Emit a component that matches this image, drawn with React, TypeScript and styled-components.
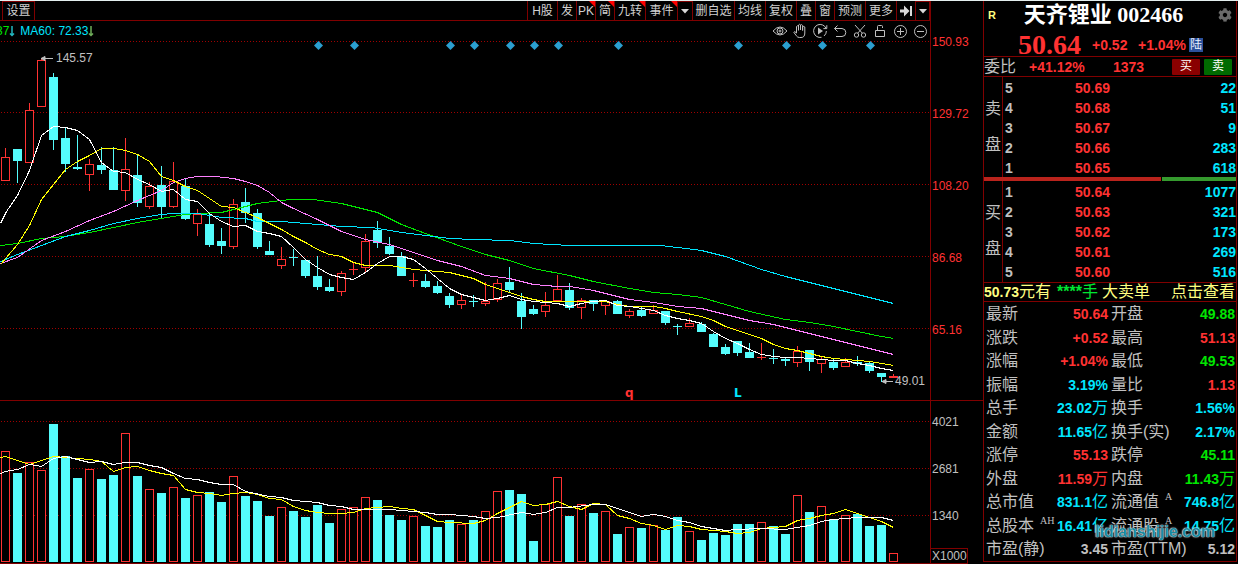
import React from "react";
import styled, { createGlobalStyle, css } from "styled-components";
import { FaCog } from "react-icons/fa";

const RED = "#ff3232";
const CYAN = "#00e6ff";
const CANDLE = "#54fcfc";
const GREEN = "#00e600";
const GREY = "#c0c0c0";
const LINE = "#800000";
const YELLOW = "#ffff80";

const GlobalStyle = createGlobalStyle`
  *, *::before, *::after { box-sizing: border-box; }
  body {
    margin: 0;
    background: #000;
    color: ${GREY};
    font-family: "Liberation Sans", "Noto Sans CJK SC", sans-serif;
    font-size: 12px;
  }
  button { font-family: inherit; }
`;

/* ---------- page frame ---------- */

const Page = styled.main`
  display: flex;
  align-items: stretch;
  min-height: 100vh;
  border-top: 1px solid #e4eeee;
  background: #000;
  overflow: hidden;
`;

const ChartSide = styled.section`
  flex: 1;
  min-width: 0;
  display: grid;
  grid-template-columns: minmax(0, 1fr) 53px;
  grid-template-rows: 400px auto;
`;

const Pane = styled.div<{ $bottom?: number }>`
  display: flex;
  flex-direction: column;
  border-bottom: ${(p) => p.$bottom ?? 1}px solid ${LINE};
  overflow: hidden;
`;

/* ---------- toolbar ---------- */

const Toolbar = styled.nav`
  display: flex;
  justify-content: space-between;
  height: 20px;
  padding-left: 2px;
  border-bottom: 1px solid ${LINE};
`;

const ToolGroup = styled.div`
  display: flex;
`;

const ToolButton = styled.button<{ $width: number; $mark?: boolean; $boxed?: boolean }>`
  position: relative;
  display: flex;
  align-items: center;
  justify-content: center;
  width: ${(p) => p.$width}px;
  height: 19px;
  padding: 0;
  border: 0 solid ${LINE};
  border-left-width: 1px;
  background: none;
  color: #d0d0d0;
  font-size: 12px;
  line-height: 18px;
  white-space: nowrap;

  &:last-child {
    border-right-width: 1px;
  }
  ${(p) =>
    p.$boxed &&
    css`
      border-top-width: 1px;
    `}
  ${(p) =>
    p.$mark &&
    css`
      &::after {
        content: "";
        position: absolute;
        top: 0;
        right: 0;
        border: 3px solid transparent;
        border-top-color: #f00;
        border-right-color: #f00;
      }
    `}
`;

const Legend = styled.div`
  display: flex;
  justify-content: space-between;
  align-items: center;
  height: 20px;
  flex: none;
`;

const LegendText = styled.div`
  display: flex;
  gap: 5px;
  margin-left: -4px;
  line-height: 16px;
  white-space: nowrap;
`;

const Ma = styled.span<{ $color: string }>`
  display: flex;
  align-items: center;
  color: ${(p) => p.$color};
`;

const IconButton = styled.button`
  display: flex;
  align-items: center;
  justify-content: center;
  width: 20px;
  height: 20px;
  padding: 0;
  border: 0;
  background: none;
  color: ${GREY};
`;

const Plot = styled.svg`
  display: block;
  width: 100%;
  flex: none;
`;

/* ---------- axis ---------- */

const Axis = styled.div<{ $color: string; $gap: number; $top: number }>`
  display: flex;
  flex-direction: column;
  align-items: flex-start;
  gap: ${(p) => p.$gap}px;
  padding: ${(p) => p.$top}px 0 0 1px;
  border-left: 1px solid ${LINE};
  border-bottom: 1px solid ${LINE};
  color: ${(p) => p.$color};
  line-height: 16px;
`;

const Unit = styled.span`
  margin-left: -1px;
  margin-top: -7px;
  border: 1px solid ${LINE};
  border-left: 0;
  padding-left: 1px;
  line-height: 14px;
`;

/* ---------- quote panel ---------- */

const Panel = styled.aside`
  position: relative;
  flex: none;
  width: 254px;
  margin-right: 1px;
  border: 1px solid ${LINE};
  border-top: 0;
  align-self: flex-start;
`;

const Head = styled.header`
  height: 56px;
  border-bottom: 1px solid ${LINE};
`;

const TitleRow = styled.div`
  display: flex;
  align-items: center;
  justify-content: space-between;
  height: 27px;
  padding: 0 4px;
`;

const Flag = styled.span`
  color: ${YELLOW};
  font-size: 11px;
  font-weight: bold;
`;

const Title = styled.h1`
  margin: 0 7px 0 0;
  color: #fff;
  font: bold 22px/26px "Liberation Serif", "Noto Sans CJK SC", serif;
  white-space: nowrap;
`;

const GearButton = styled.button`
  display: flex;
  padding: 0;
  border: 0;
  background: none;
  color: #6a6a6a;
`;

const PriceRow = styled.div`
  display: flex;
  align-items: center;
  height: 28px;
  padding: 5px 0 0 34px;
`;

const LastPrice = styled.strong`
  width: 74px;
  color: ${RED};
  font: bold 28px/22px "Liberation Serif", serif;
`;

const Num = styled.span<{ $color?: string; $width?: number }>`
  width: ${(p) => (p.$width ? `${p.$width}px` : "auto")};
  color: ${(p) => p.$color ?? RED};
  font-size: 14px;
  font-weight: bold;
`;

const Badge = styled.span`
  width: 14px;
  height: 14px;
  background: #2c519c;
  color: #e8eefa;
  font-size: 12px;
  line-height: 14px;
  text-align: center;
`;

const RatioRow = styled.div`
  display: flex;
  align-items: center;
  height: 20px;
  padding-right: 3px;
  border-bottom: 1px solid ${LINE};
`;

const RatioLabel = styled.span`
  width: 45px;
  font-size: 16px;
  line-height: 18px;
`;

const TradeButton = styled.button<{ $bg: string }>`
  width: 28px;
  height: 16px;
  margin-left: 4px;
  padding: 0;
  border: 0;
  border-radius: 1px;
  background: ${(p) => p.$bg};
  color: #fff;
  font-size: 12px;
  line-height: 15px;
`;

const Book = styled.section<{ $height: number }>`
  display: flex;
  align-items: stretch;
  height: ${(p) => p.$height}px;
`;

const BookSide = styled.div`
  display: flex;
  flex-direction: column;
  align-items: center;
  gap: 18px;
  width: 19px;
  padding-top: 23px;
  border-right: 1px solid ${LINE};
  font-size: 16px;
  line-height: 18px;
`;

const BookTable = styled.table`
  flex: 1;
  align-self: flex-start;
  border-collapse: collapse;
  table-layout: fixed;
  font-size: 14px;
  font-weight: bold;

  th, td {
    height: 20px;
    padding: 1px 0 0;
    line-height: 18px;
    text-align: right;
  }
  th { width: 12px; padding-left: 2px; text-align: left; }
  td:nth-child(2) { width: 95px; color: ${RED}; }
  td:nth-child(3) { color: ${CYAN}; }
`;

const Balance = styled.div`
  display: flex;
  gap: 1px;
  height: 4px;
`;

const BalancePart = styled.div<{ $share: number; $color: string }>`
  flex: ${(p) => p.$share};
  background: ${(p) => p.$color};
`;

const Notice = styled.a`
  display: flex;
  align-items: center;
  height: 20px;
  border: 1px solid ${LINE};
  border-width: 1px 0;
  color: ${YELLOW};
  font-size: 16px;
  line-height: 18px;
  text-decoration: none;
  white-space: nowrap;

  em { margin: 0 4px 0 6px; color: #00e632; font-style: normal; }
  span:last-child { margin-left: auto; padding-right: 1px; }
`;

const Stats = styled.table`
  width: 100%;
  border-collapse: collapse;
  table-layout: fixed;

  tr { height: 23px; }
  tr:nth-child(odd) { height: 24px; }
  th, td { padding: 0; white-space: nowrap; line-height: 20px; font-size: 16px; }
  th { padding-left: 2px; text-align: left; font-weight: normal; }
  th:nth-child(1) { width: 70px; }
  td:nth-child(2) { width: 54px; }
  th:nth-child(3) { width: 76px; padding-left: 3px; }
  td { text-align: right; }
  td:nth-child(4) { padding-right: 1px; }
  td > span { float: right; }
  sup {
    margin-left: 6px;
    font: 10px/10px "Liberation Serif", serif;
    vertical-align: 7px;
  }
`;

const Value = styled.span<{ $color: string }>`
  color: ${(p) => p.$color};

  b { font-size: 14px; }
`;

const Watermark = styled.div`
  position: absolute;
  right: 21px;
  bottom: 17px;
  color: #1a8a9e;
  font-size: 16px;
  font-weight: bold;
  line-height: 24px;
  text-shadow: 0 0 1px #d4dde2, 0 0 1px #d4dde2, 0 0 2px #d4dde2;
`;

/* ---------- data ---------- */

// Each candle: rising flag, body top, body bottom, high, low, volume bar top.
type Candle = [0 | 1, number, number, number, number, number];

const candles: Candle[] = [
  [1, 157, 181, 148, 181, 451], [0, 149, 161, 149, 183, 473], [1, 110, 163, 103, 163, 462],
  [1, 60, 107, 58, 107, 470], [0, 77, 140, 73, 150, 424], [0, 138, 164, 127, 172, 456],
  [0, 167, 169, 135, 170, 478], [1, 164, 175, 159, 191, 469], [0, 165, 170, 147, 174, 479],
  [0, 170, 190, 147, 190, 475], [1, 169, 191, 138, 201, 433], [0, 175, 203, 155, 207, 476],
  [1, 186, 207, 182, 209, 489], [0, 185, 207, 166, 218, 493], [1, 181, 207, 162, 208, 487],
  [0, 186, 219, 178, 220, 498], [1, 214, 224, 209, 236, 495], [0, 224, 245, 212, 247, 492],
  [0, 241, 246, 228, 254, 502], [1, 204, 247, 199, 249, 476], [0, 202, 213, 188, 223, 496],
  [0, 213, 247, 209, 249, 501], [0, 251, 255, 241, 255, 516], [1, 259, 266, 247, 269, 507],
  [0, 257, 258, 249, 266, 511], [0, 260, 276, 260, 278, 517], [0, 276, 287, 256, 290, 505],
  [0, 287, 291, 279, 292, 523], [1, 273, 292, 271, 296, 509], [1, 269, 270, 263, 275, 507],
  [1, 241, 268, 234, 272, 497], [0, 230, 243, 221, 248, 500], [0, 246, 254, 237, 255, 515],
  [0, 256, 276, 252, 276, 520], [1, 280, 281, 273, 287, 516], [0, 281, 287, 274, 288, 526],
  [0, 286, 293, 281, 294, 527], [0, 296, 305, 293, 308, 520], [1, 300, 305, 294, 309, 524],
  [0, 301, 302, 295, 307, 520], [1, 301, 304, 282, 306, 511], [1, 283, 300, 279, 302, 491],
  [0, 282, 290, 267, 293, 490], [0, 301, 317, 293, 329, 494], [0, 309, 314, 305, 315, 541],
  [1, 305, 312, 292, 317, 504], [1, 289, 301, 275, 301, 477], [0, 290, 308, 283, 310, 516],
  [1, 300, 308, 298, 319, 504], [0, 300, 304, 300, 311, 513], [1, 301, 306, 300, 315, 511],
  [0, 301, 314, 300, 314, 534], [1, 311, 316, 309, 318, 527], [0, 310, 316, 307, 317, 528],
  [1, 310, 314, 305, 314, 525], [0, 311, 323, 311, 325, 530], [0, 326, 327, 324, 335, 517],
  [1, 323, 327, 318, 327, 531], [0, 324, 332, 322, 332, 540], [0, 334, 347, 333, 347, 533],
  [0, 347, 354, 344, 355, 535], [0, 341, 353, 341, 356, 524], [0, 352, 358, 343, 358, 524],
  [1, 357, 358, 343, 360, 522], [0, 358, 359, 349, 364, 526], [0, 359, 361, 357, 366, 534],
  [1, 351, 363, 346, 367, 495], [0, 350, 362, 350, 371, 512], [1, 359, 364, 357, 373, 506],
  [0, 362, 368, 359, 370, 519], [1, 362, 367, 358, 367, 515], [0, 362, 364, 356, 366, 514],
  [0, 363, 371, 362, 373, 526], [0, 373, 377, 373, 382, 525], [1, 376, 378, 374, 378, 553],
];

const priceLines = [
  { color: "#00e600", points: "0,245 17,243 41,238 65,236 89,232 113,227 137,222 161,218 185,214 197,213 221,212 233,209 257,203 281,200 290,199 312,199 320,200 341,203 377,212 401,224 425,233 461,246 485,254 509,260 533,268 569,275 593,281 629,288 653,292 677,294 701,297 725,304 749,311 785,319 809,322 833,326 857,331 881,336 893,338" },
  { color: "#00e6ff", points: "0,261 17,254 41,245 65,236 89,230 113,223 137,218 161,214 173,213 197,213 221,217 245,218 257,221 281,221 317,224 341,226 371,227 389,230 401,232 425,235 449,238 473,239 509,240 533,243 569,245 660,245 677,247 701,250 725,256 761,269 785,276 821,285 857,294 893,303" },
  { color: "#ff80ff", points: "0,263 17,257 41,240 65,231 89,220 113,211 137,200 161,190 173,182 185,178 197,176 215,176 233,178 245,181 257,185 269,192 281,202 293,208 317,219 341,231 365,239 389,244 413,252 437,260 461,266 485,275 509,278 533,284 557,286 569,286 593,290 617,296 629,299 653,302 677,306 701,308 725,314 749,320 773,324 797,330 821,336 845,342 869,348 893,354" },
  { color: "#ffff00", points: "0,264 17,244 29,225 41,199 53,184 65,169 77,161 89,155 101,148 113,148 125,150 137,154 149,161 161,176 173,180 185,186 197,190 209,198 221,206 233,207 245,212 257,217 269,223 281,229 293,236 305,242 317,249 329,254 341,256 353,262 365,265 389,265 401,267 413,269 437,271 449,272 461,275 473,278 485,284 497,288 509,292 521,296 533,299 545,301 605,301 617,304 629,306 653,306 665,308 677,311 701,316 713,320 725,326 737,330 749,334 761,338 773,344 785,348 797,350 809,353 821,356 833,358 857,360 869,361 881,363 893,365" },
  { color: "#ffffff", points: "0,223 6,211 17,195 29,170 41,135 53,126 65,127 77,130 89,139 101,162 113,171 125,172 137,179 149,184 161,191 173,189 185,199 197,201 209,213 221,221 233,226 245,225 257,231 269,233 281,236 293,247 305,259 317,267 329,274 341,277 353,279 365,272 377,263 389,256 401,256 413,259 425,268 437,278 449,288 461,294 473,297 485,300 497,298 509,295 521,299 533,301 545,302 557,303 569,306 581,303 593,301 605,300 617,305 629,306 641,308 653,310 665,315 677,318 689,320 701,323 713,331 725,338 737,343 749,349 761,354 773,356 785,357 797,357 809,358 821,359 833,360 845,360 857,363 869,365 881,368 893,370" },
];

const volumeLines = [
  { color: "#ffff00", points: "0,457 5,456 17,460 29,464 41,460 53,456 65,457 89,459 101,461 113,471 125,467 137,466 149,470 161,473 173,475 185,489 197,492 209,493 221,495 233,493 245,492 257,494 269,498 281,499 293,506 305,510 317,512 329,513 341,513 353,512 365,508 377,507 389,506 401,508 413,509 425,515 437,521 449,522 473,523 485,520 497,513 509,507 521,501 533,505 545,504 557,501 569,506 581,509 593,503 605,504 617,515 629,518 641,523 653,525 665,529 677,525 689,526 701,529 725,531 737,533 749,532 761,528 785,526 797,520 809,518 821,515 833,513 845,509 857,513 869,517 881,521 893,527" },
  { color: "#ffffff", points: "0,473 5,471 17,469 29,464 41,466 53,458 65,456 77,459 89,462 101,461 113,464 125,462 137,462 149,465 161,467 173,473 185,478 197,479 209,482 221,484 233,484 245,491 269,496 281,497 293,500 317,502 329,505 341,506 353,509 389,509 413,511 425,512 437,514 449,514 473,516 485,518 497,517 521,512 533,514 545,512 557,507 569,507 593,504 605,504 617,508 629,512 641,516 653,514 665,516 677,520 689,522 701,526 725,530 737,529 761,528 785,529 797,527 809,525 821,521 833,519 845,518 857,517 881,517 893,520" },
];

const priceTicks = ["150.93", "129.72", "108.20", "86.68", "65.16"];
const volumeTicks = ["4021", "2681", "1340"];
const events = [318, 354, 450, 474, 510, 534, 558, 618, 738, 786, 822, 870];

const tools: { label: string; width: number; mark?: boolean }[] = [
  { label: "H股", width: 30 },
  { label: "发", width: 19 },
  { label: "PK", width: 19, mark: true },
  { label: "简", width: 19, mark: true },
  { label: "九转", width: 31, mark: true },
  { label: "事件", width: 32, mark: true },
  { label: "▾", width: 15 },
  { label: "删自选", width: 42 },
  { label: "均线", width: 31 },
  { label: "复权", width: 31 },
  { label: "叠", width: 19 },
  { label: "窗", width: 19 },
  { label: "预测", width: 31 },
  { label: "更多", width: 31 },
  { label: "⇥", width: 19 },
  { label: "▾", width: 15 },
];

const asks = [["5", "50.69", "22"], ["4", "50.68", "51"], ["3", "50.67", "9"], ["2", "50.66", "283"], ["1", "50.65", "618"]];
const bids = [["1", "50.64", "1077"], ["2", "50.63", "321"], ["3", "50.62", "173"], ["4", "50.61", "269"], ["5", "50.60", "516"]];

// label, superscript, number, unit, colour
type Stat = [string, string, string, string, string];
const stats: [Stat, Stat][] = [
  [["最新", "", "50.64", "", RED], ["开盘", "", "49.88", "", GREEN]],
  [["涨跌", "", "+0.52", "", RED], ["最高", "", "51.13", "", RED]],
  [["涨幅", "", "+1.04%", "", RED], ["最低", "", "49.53", "", GREEN]],
  [["振幅", "", "3.19%", "", CYAN], ["量比", "", "1.13", "", RED]],
  [["总手", "", "23.02", "万", CYAN], ["换手", "", "1.56%", "", CYAN]],
  [["金额", "", "11.65", "亿", CYAN], ["换手(实)", "", "2.17%", "", CYAN]],
  [["涨停", "", "55.13", "", RED], ["跌停", "", "45.11", "", GREEN]],
  [["外盘", "", "11.59", "万", RED], ["内盘", "", "11.43", "万", GREEN]],
  [["总市值", "", "831.1", "亿", CYAN], ["流通值", "A", "746.8", "亿", CYAN]],
  [["总股本", "AH", "16.41", "亿", CYAN], ["流通股", "A", "14.75", "亿", CYAN]],
  [["市盈(静)", "", "3.45", "", GREY], ["市盈(TTM)", "", "5.12", "", GREY]],
];

/* ---------- icons ---------- */

const chartIcons: { label: string; art: React.ReactNode }[] = [
  { label: "显示", art: <><path d="M1 8Q8 0 15 8Q8 16 1 8Z" /><circle cx="8" cy="8" r="3" /><circle cx="8" cy="8" r="1" /></> },
  { label: "拖动", art: <path d="M4.5 10V3.5Q5.5 2 6.5 3.5V7.5M6.5 7V2Q7.5.6 8.5 2V7M8.5 7V2Q9.6 1 10.6 2.5V7.5M10.6 7.5V4Q11.8 2.8 12.8 4V10Q12.8 14.5 9 14.5H7.5Q5.5 14.5 4.4 12.8L1.8 9.3Q2.4 7.6 4.5 10" /> },
  { label: "回放", art: <><path d="M9.5 14.3A6.5 6.5 0 1 1 14 5.2M14.4 8A6.5 6.5 0 0 1 12 13" /><path d="M14.8 2.2V5.6H11.4" /><path d="M6 4.5V11.5L11 8Z" fill="currentColor" stroke="none" /></> },
  { label: "撤销", art: <><path d="M5.5 2.5L2.5 5.5L5.5 8.5" /><path d="M2.5 5.5H10Q13.8 5.8 13.8 9.5Q13.8 13.5 10 13.5H4" /></> },
  { label: "剪切", art: <><circle cx="4.5" cy="12" r="2.2" /><circle cx="11.5" cy="12" r="2.2" /><path d="M3 2L10.3 10.2M13 2L5.7 10.2" /></> },
  { label: "锁定", art: <><path d="M3.500 7.500H12.500V13.500H3.500Z" /><path d="M5.500 7.500V3.500Q5.500 2.500 6.500 2.500H9.500Q10.500 2.500 10.500 3.500V5" /></> },
  { label: "放大", art: <><circle cx="8.5" cy="8.5" r="6" /><path d="M8.500 5V12M5 8.500H12" /></> },
  { label: "缩小", art: <><circle cx="8.5" cy="8.5" r="6" /><path d="M5 8.500H12" /></> },
];

const Caret = () => (
  <svg width="8" height="5" viewBox="0 0 8 5">
    <path d="M0 0H8L4 4.5Z" fill="#d8d8d8" />
  </svg>
);

const SkipEnd = () => (
  <svg width="12" height="12" viewBox="0 0 12 12" fill="#d8d8d8">
    <path d="M0 4.500H4V0.500L9.500 6L4 11.500V7.500H0Z" />
    <path d="M10 1H12V11H10Z" />
  </svg>
);

const DownArrow = ({ color }: { color: string }) => (
  <svg width="6" height="12" viewBox="0 0 6 12" stroke={color} fill="none">
    <path d="M3 1V10M1 8.500L3 10.500L5 8.500" strokeWidth="1.500" />
  </svg>
);

const toolContent = (label: string) => {
  if (label === "▾") return <Caret />;
  if (label === "⇥") return <SkipEnd />;
  return label;
};

const toolName = (label: string) => {
  if (label === "▾") return "展开";
  if (label === "⇥") return "到末尾";
  return undefined;
};

/* ---------- parts ---------- */

const centre = (i: number) => 5 + 12 * i;

const GridLine = ({ y }: { y: number }) => (
  <line x1={1} x2={930} y1={y + 0.5} y2={y + 0.5} stroke="#a00000" strokeDasharray="1 2" />
);

const Series = ({ color, points }: { color: string; points: string }) => (
  <polyline points={points} fill="none" stroke={color} transform="translate(0.5 0.5)" />
);

const Bar = ({ x, up, top, bottom }: { x: number; up: boolean; top: number; bottom: number }) =>
  up && bottom - top > 2 ? (
    <rect x={x - 3.5} y={top + 0.5} width={8} height={bottom - top - 1} fill="#000" stroke={RED} />
  ) : (
    <rect x={x - 4} y={top} width={9} height={bottom - top} fill={up ? RED : CANDLE} />
  );

const PricePlot = () => (
  <Plot height={359} viewBox="0 41 930 359" preserveAspectRatio="xMinYMin meet" role="img" aria-label="K线图">
    <g shapeRendering="crispEdges">
      {[41, 112, 184, 256, 328].map((y) => <GridLine key={y} y={y} />)}
      {candles.map(([up, top, bottom, high, low], i) => (
        <g key={i}>
          <rect x={centre(i)} y={high} width={1} height={low - high} fill={up ? RED : CANDLE} />
          <Bar x={centre(i)} up={up === 1} top={top} bottom={bottom} />
        </g>
      ))}
      {priceLines.map((l) => <Series key={l.color} {...l} />)}
    </g>
    {events.map((x) => (
      <path key={x} d={`M${x + 0.5} 41L${x + 5} 45.500L${x + 0.5} 50L${x - 4} 45.500Z`} fill="#2b9fd0" />
    ))}
    <g fill={GREY} stroke={GREY}>
      <path d="M41 58.500H53M45 56.500L41 58.500L45 60.500Z" />
      <path d="M882 381.500H893M886 379.500L882 381.500L886 383.500Z" />
    </g>
    <g fill={GREY} fontSize={12}>
      <text x={56} y={62}>145.57</text>
      <text x={895} y={385}>49.01</text>
    </g>
    <g fontSize={12} fontWeight="bold" fontFamily="DejaVu Sans, sans-serif">
      <text x={625} y={397} fill={RED}>q</text>
      <text x={734} y={397} fill={CYAN}>L</text>
    </g>
  </Plot>
);

const VolumePlot = () => (
  <Plot height={161} viewBox="0 401 930 161" preserveAspectRatio="xMinYMin meet" role="img" aria-label="成交量">
    <g shapeRendering="crispEdges">
      {[421, 468, 515].map((y) => <GridLine key={y} y={y} />)}
      {candles.map((c, i) => (
        <Bar key={i} x={centre(i)} up={c[0] === 1} top={c[5]} bottom={562} />
      ))}
      {volumeLines.map((l) => <Series key={l.color} {...l} />)}
    </g>
  </Plot>
);

const OrderBook = ({ side, rows, height }: { side: string; rows: string[][]; height: number }) => (
  <Book $height={height}>
    <BookSide>
      <span>{side}</span>
      <span>盘</span>
    </BookSide>
    <BookTable>
      <tbody>
        {rows.map(([level, price, volume]) => (
          <tr key={level}>
            <th scope="row">{level}</th>
            <td>{price}</td>
            <td>{volume}</td>
          </tr>
        ))}
      </tbody>
    </BookTable>
  </Book>
);

const StatCells = ({ stat: [label, mark, value, unit, color] }: { stat: Stat }) => (
  <>
    <th scope="row">
      {label}
      {mark && <sup>{mark}</sup>}
    </th>
    <td>
      <Value $color={color}>
        <b>{value}</b>
        {unit}
      </Value>
    </td>
  </>
);

export default function App() {
  return (
    <>
      <GlobalStyle />
      <Page>
        <ChartSide>
          <Pane>
            <Toolbar>
              <ToolGroup>
                <ToolButton $width={33} $boxed>设置</ToolButton>
              </ToolGroup>
              <ToolGroup>
                {tools.map(({ label, width, mark }, i) => (
                  <ToolButton key={i} $width={width} $mark={mark} $boxed={label === "▾"} aria-label={toolName(label)}>
                    {toolContent(label)}
                  </ToolButton>
                ))}
              </ToolGroup>
            </Toolbar>
            <Legend>
              <LegendText>
                <Ma $color={GREEN}>37<DownArrow color="#22b8c0" /></Ma>
                <Ma $color={CYAN}>MA60: 72.33<DownArrow color="#6fae5a" /></Ma>
              </LegendText>
              <ToolGroup>
                {chartIcons.map(({ label, art }) => (
                  <IconButton key={label} aria-label={label}>
                    <svg width="16" height="16" viewBox="0 0 16 16" fill="none" stroke="currentColor">{art}</svg>
                  </IconButton>
                ))}
              </ToolGroup>
            </Legend>
            <PricePlot />
          </Pane>
          <Axis $color={RED} $gap={56} $top={33}>
            {priceTicks.map((t) => <span key={t}>{t}</span>)}
          </Axis>
          <Pane $bottom={2}>
            <VolumePlot />
          </Pane>
          <Axis $color={GREY} $gap={31} $top={13}>
            {volumeTicks.map((t) => <span key={t}>{t}</span>)}
            <Unit>X1000</Unit>
          </Axis>
        </ChartSide>

        <Panel>
          <Head>
            <TitleRow>
              <Flag>R</Flag>
              <Title>天齐锂业 002466</Title>
              <GearButton aria-label="设置"><FaCog size={14} /></GearButton>
            </TitleRow>
            <PriceRow>
              <LastPrice>50.64</LastPrice>
              <Num $width={46}>+0.52</Num>
              <Num $width={51}>+1.04%</Num>
              <Badge>陆</Badge>
            </PriceRow>
          </Head>
          <RatioRow>
            <RatioLabel>委比</RatioLabel>
            <Num $width={84}>+41.12%</Num>
            <Num $width={55}>1373</Num>
            <TradeButton $bg="#8a0000">买</TradeButton>
            <TradeButton $bg="#006a00">卖</TradeButton>
          </RatioRow>
          <OrderBook side="卖" rows={asks} height={100} />
          <Balance>
            <BalancePart $share={177} $color="#b9231c" />
            <BalancePart $share={74} $color="#359a2e" />
          </Balance>
          <OrderBook side="买" rows={bids} height={101} />
          <Notice href="#orders">
            <Num $color={YELLOW}>50.73</Num>
            <span>元有</span>
            <em><b>****</b>手</em>
            <span>大卖单</span>
            <span>点击查看</span>
          </Notice>
          <Stats>
            <tbody>
              {stats.map(([left, right]) => (
                <tr key={left[0]}>
                  <StatCells stat={left} />
                  <StatCells stat={right} />
                </tr>
              ))}
            </tbody>
          </Stats>
          <Watermark>lidianshijie.com</Watermark>
        </Panel>
      </Page>
    </>
  );
}
